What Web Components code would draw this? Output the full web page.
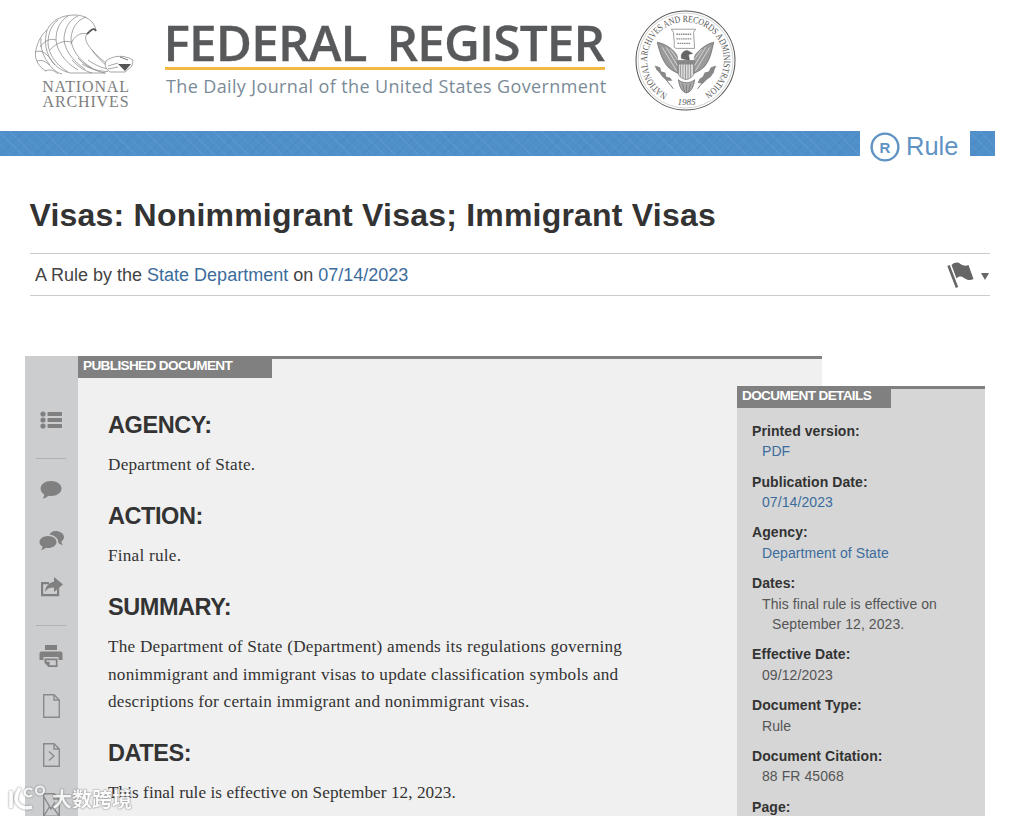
<!DOCTYPE html>
<html lang="en">
<head>
<meta charset="utf-8">
<title>Visas: Nonimmigrant Visas; Immigrant Visas</title>
<style>
    html, body { margin: 0; padding: 0; background: #fff; }
    body { height: 816px; overflow: hidden; position: relative; font-family: "Liberation Sans", Arial, sans-serif; color: #333; }
    fr-title a { color: #3b6c9c; text-decoration: none; }
</style>
</head>
<body>
<fr-header></fr-header>
<fr-type-bar>Rule</fr-type-bar>
<fr-title>
    Visas: Nonimmigrant Visas; Immigrant Visas
    <span slot="byline">A Rule by the <a href="#">State Department</a> on <a href="#">07/14/2023</a></span>
</fr-title>
<fr-document>
    <fr-section titulo="AGENCY:">Department of State.</fr-section>
    <fr-section titulo="ACTION:">Final rule.</fr-section>
    <fr-section titulo="SUMMARY:">The Department of State (Department) amends its regulations governing nonimmigrant and immigrant visas to update classification symbols and descriptions for certain immigrant and nonimmigrant visas.</fr-section>
    <fr-section titulo="DATES:" espaco=".05">This final rule is effective on September 12, 2023.</fr-section>
    <fr-details slot="details">
        <fr-detail rotulo="Printed version:" link>PDF</fr-detail>
        <fr-detail rotulo="Publication Date:" link>07/14/2023</fr-detail>
        <fr-detail rotulo="Agency:" link>Department of State</fr-detail>
        <fr-detail rotulo="Dates:">This final rule is effective on September 12, 2023.</fr-detail>
        <fr-detail rotulo="Effective Date:">09/12/2023</fr-detail>
        <fr-detail rotulo="Document Type:">Rule</fr-detail>
        <fr-detail rotulo="Document Citation:">88 FR 45068</fr-detail>
        <fr-detail rotulo="Page:"></fr-detail>
    </fr-details>
</fr-document>
<fr-watermark></fr-watermark>

<script>
// cada componente monta o proprio shadow root
class FrHeader extends HTMLElement {
    connectedCallback() {
        this.attachShadow({mode: "open"});
        // penas da asa: arcos em coordenadas da pagina
        const penas = [
            "M96 31C95 21 85 15 75 15C62 15 52 20 47 30",
            "M47 30C40 36 37 44 35.500 52C34.500 60 39 67 46 71",
            "M96 31C94 27 91 30 87 34C84 38 86 43 92 50C97 56 103 61 109 65",
            "M86 17C77 20 72 28 71 38C71 48 78 60 92 68",
            "M78 16C69 20 65 28 64 38C64 48 71 60 85 69",
            "M68 16C60 21 56 29 56 40C57 50 64 62 78 70",
            "M58 20C51 25 48 34 48 44C49 54 55 64 68 72",
            "M47 30C44 42 45 54 55 65",
            "M41 38C40 47 43 57 50 65",
            "M87 34C80 32 74 36 71 44",
            "M71 42C64 40 56 43 50 50",
            "M56 40C50 38 44 41 40 47",
            "M35.500 52C42 49 47 54 52 61C56 67 62 71 70 73",
            "M37 61C43 59 48 63 52 68C55 71 58 73 62 74",
            "M45 71C50 69 54 70 58 74",
            "M70 73L106 73",
            "M82 64C90 69 100 71.500 108 71.500",
            "M88 60C95 65 102 68 108 69",
            "M92 50C96 56 101 61 106 65",
            "M78 58C85 66 95 71 105 73",
            "M72 60C78 67 85 71 92 73"
        ].map(d => `<path d="${d}"/>`).join("");
        this.shadowRoot.innerHTML = `
            <style>
                :host { display: flex; height: 131px; box-sizing: border-box; padding: 13px 0 0 33px; }
                .arquivos { width: 103px; margin-right: 29px; display: flex; flex-direction: column; align-items: center; }
                .arquivos svg { display: block; width: 103px; height: 62px; flex: none; }
                .arquivos p { margin: 4px 0 0 3px; font: 16px/15px "Liberation Serif", serif; letter-spacing: .85px; text-align: center; color: #808080; white-space: nowrap; }
                .marca { width: 442px; margin-top: 4px; }
                h1 { margin: 0 0 0 -1.500px; font: 600 49.500px/50px "Open Sans", sans-serif; color: #58595b; white-space: nowrap; word-spacing: 8px; letter-spacing: -.87px; -webkit-text-stroke: .3px #58595b; }
                .fio { height: 3px; margin: 0 2px 0 0; background: #f2b843; }
                .sub { margin: 4px 0 0 1px; font: 18px/24px "Open Sans", sans-serif; color: #7a8b98; white-space: nowrap; letter-spacing: .37px; }
                .selo { width: 101px; height: 101px; margin: -3px 0 0 28px; flex: none; }
            </style>
            <div class="arquivos">
                <svg viewBox="33 13 103 62" fill="none" stroke="#808080" stroke-width=".7" aria-hidden="true">
                    ${penas}
                    <path stroke-width="1.800" stroke="#555" d="M96 31C94 27 91 30 87 34"/>
                    <path fill="#fff" d="M106 61C112 56 123 54 133 60L132 66L125 72L110 72C106 69 104 65 106 61Z"/>
                    <path d="M108 66L118 63M108 69L118 67" />
                    <path fill="#555" stroke="none" d="M118 64L131 64L125 71Z"/>
                    <path stroke="#444" d="M120 57L128 60"/>
                </svg>
                <p>NATIONAL<br>ARCHIVES</p>
            </div>
            <div class="marca">
                <h1>FEDERAL REGISTER</h1>
                <div class="fio"></div>
                <p class="sub">The Daily Journal of the United States Government</p>
            </div>
            <svg class="selo" viewBox="0 0 100 100">
                <circle cx="50" cy="50" r="49" fill="#fff" stroke="#555" stroke-width="1"/>
                <circle cx="50" cy="50" r="47" fill="none" stroke="#aaa" stroke-width=".5"/>
                <defs><path id="arco" d="M32.300 83.400A38 38 0 1 1 67.700 83.400"/></defs>
                <text font-family="Liberation Serif, serif" font-size="9.500" fill="#555">
                    <textPath href="#arco" textLength="200" lengthAdjust="spacingAndGlyphs">NATIONAL ARCHIVES AND RECORDS ADMINISTRATION</textPath>
                </text>
                <text x="51" y="94" text-anchor="middle" font-family="Liberation Serif, serif" font-size="9" font-style="italic" fill="#555">1985</text>
                <!-- pergaminho -->
                <path d="M36 19L60 19L58 22L59 38L41 38C39 38 38 36 39 34L38 22Z" fill="#fff" stroke="#777" stroke-width=".7"/>
                <path d="M41 24H56M41 28.500H56M42 33H55" stroke="#888" stroke-width="1.300" stroke-dasharray="1.500 .7"/>
                <!-- asas -->
                <path d="M22 32C29 33 37 38 41 44C43 48 43 56 43 63C37 60 33 58 30 53C26 47 24 40 22 32Z" fill="#9a9a9a" stroke="#555" stroke-width=".6"/>
                <path d="M78 32C72 33 65 38 60 44C58 48 58 56 58 63C64 60 68 58 71 53C75 47 76 40 78 32Z" fill="#9a9a9a" stroke="#555" stroke-width=".6"/>
                <path d="M27 37L41 60M31 37L42 55M35 39L43 50M60 60L74 37M59 55L70 37M58 50L66 39" stroke="#eee" stroke-width=".7"/>
                <!-- cabeca -->
                <path d="M46 48C45 43 48 40 52 40L57 43L53 44L54 50Z" fill="#666" stroke="#444" stroke-width=".4"/>
                <!-- escudo -->
                <path d="M43 50H58V63C58 66 54 68 50.500 69C47 68 43 66 43 63Z" fill="#ddd" stroke="#666" stroke-width=".6"/>
                <path d="M43 50H58V54H43Z" fill="#888"/>
                <path d="M45 54V66M47.500 54V67.500M50 54V68.500M52.500 54V68.500M55 54V67" stroke="#888" stroke-width=".8"/>
                <!-- ramos e flechas -->
                <path d="M20 56C25 62 30 68 38 78" fill="none" stroke="#555" stroke-width=".8"/>
                <path d="M20 55l5 2l1 4l4 1l1 4l4 1l2 3l-5 0l-5-4l-3-4l-3-3z" fill="#888"/>
                <path d="M80 56C75 62 70 68 62 78" fill="none" stroke="#555" stroke-width=".8"/>
                <path d="M80 55l-5 2l-2 4l-4 1l-2 4l-3 2l-2 4l5 1l4-4l4-3l3-4z" fill="#888"/>
                <path d="M43 69C44 78 48 82 51 82C54 82 58 78 59 69C55 73 47 73 43 69Z" fill="#aaa" stroke="#555" stroke-width=".6"/>
                <path d="M47 73L49 81M51 74V82M55 73L53 81" stroke="#555" stroke-width=".5"/>
            </svg>
        `;
    }
}

class FrTypeBar extends HTMLElement {
    connectedCallback() {
        this.attachShadow({mode: "open"});
        this.shadowRoot.innerHTML = `
            <style>
                :host { display: flex; height: 25px; align-items: center; color: #5f93c4; }
                .hachura {
                    background-color: #4f90cb;
                    background-image:
                        repeating-linear-gradient(45deg, rgba(255,255,255,.06) 0 1px, transparent 1px 8px),
                        repeating-linear-gradient(-45deg, rgba(20,60,110,.06) 0 1px, transparent 1px 8px);
                    height: 25px;
                }
                .faixa { width: 860px; flex: none; }
                .fim { width: 25px; flex: none; }
                .tipo { display: flex; align-items: center; width: 110px; flex: none; box-sizing: border-box; padding: 6px 0 0 10px; font-size: 25.500px; }
                svg { width: 30px; height: 30px; margin-right: 6px; flex: none; }
            </style>
            <div class="hachura faixa"></div>
            <div class="tipo">
                <svg viewBox="0 0 30 30" aria-hidden="true">
                    <circle cx="15" cy="15" r="13.400" fill="none" stroke="#5f93c4" stroke-width="2.400"/>
                    <text x="15" y="20.500" text-anchor="middle" font-family="Liberation Sans, sans-serif" font-weight="700" font-size="15" fill="#5f93c4">R</text>
                </svg>
                <slot></slot>
            </div>
            <div class="hachura fim"></div>
        `;
    }
}

class FrTitle extends HTMLElement {
    connectedCallback() {
        this.attachShadow({mode: "open"});
        this.shadowRoot.innerHTML = `
            <style>
                :host { display: block; padding: 37px 22px 0 30px; }
                h1 { margin: 0 0 15px -.5px; font: 700 32px/45px "Liberation Sans", sans-serif; color: #333; letter-spacing: .21px; }
                .linha { display: flex; justify-content: space-between; align-items: center; box-sizing: content-box; height: 39px; padding: 2px 0 0 5px; border-top: 1px solid #ccc; border-bottom: 1px solid #ccc; font-size: 18px; color: #444; }
                ::slotted(span) { white-space: nowrap; }
                .bandeira { display: flex; align-items: center; margin-top: -2px; }
                svg { display: block; }
                .seta { width: 0; height: 0; border-left: 4px solid transparent; border-right: 4px solid transparent; border-top: 7px solid #666; margin: 3px 1px 0 7px; }
            </style>
            <h1><slot></slot></h1>
            <div class="linha">
                <slot name="byline"></slot>
                <div class="bandeira">
                    <svg width="27" height="28" viewBox="0 0 27 28" aria-hidden="true">
                        <path d="M1.500 4.500L10 26.500" stroke="#666" stroke-width="2.600" fill="none"/>
                        <path d="M4.500 4C8 1 11 1 13.500 3C16.500 5 19 5 21.500 4L26.500 18C23 20 20 19 17 17C14 15 12 15 9.500 17.500Z" fill="#666"/>
                    </svg>
                    <div class="seta"></div>
                </div>
            </div>
        `;
    }
}

// icones da coluna lateral
const ICONES = {
    lista: `<g fill="#808080"><circle cx="3" cy="3" r="2.600"/><circle cx="3" cy="9" r="2.600"/><circle cx="3" cy="15" r="2.600"/><rect x="7.500" y="1" width="14.500" height="4" rx=".7"/><rect x="7.500" y="7" width="14.500" height="4" rx=".7"/><rect x="7.500" y="13" width="14.500" height="4" rx=".7"/></g>`,
    comentario: `<path fill="#808080" d="M11 1C17 1 21.500 4.400 21.500 8.500C21.500 12.600 17 16 11 16C10 16 9.200 15.900 8.400 15.800C6.800 17.300 4.800 18.400 2.600 18.800C3.600 17.400 4.200 15.900 4.200 14.400C2 13 .6 10.900 .6 8.500C.6 4.400 5 1 11 1Z"/>`,
    comentarios: `<g fill="#808080"><path d="M9 6C14 6 17.500 8.800 17.500 12C17.500 15.300 14 18 9 18C8.300 18 7.600 18 7 17.800C5.600 19 3.900 19.800 2 20.200C2.900 19 3.400 17.800 3.400 16.400C1.400 15.300 .5 13.700 .5 12C.5 8.800 4 6 9 6Z"/><path d="M16 1C21 1 25 3.600 25 7C25 8.900 24 10.400 22.400 11.400C22.400 12.600 23 13.800 23.900 15C22 14.700 20.600 14 19.400 13C19.400 8.600 16 5.600 10.600 4.600C11.800 2.400 13.800 1 16 1Z"/></g>`,
    compartilhar: `<g fill="#808080"><path d="M2 6H10V8.200H4.200V18H18V13.500L20.200 11.500V20.200H2Z"/><path d="M15 1L24 8.500L15 16V11.400C11 11.200 8 12.600 6 16C6.400 10.600 9.600 6.600 15 5.800Z"/></g>`,
    imprimir: `<g fill="#808080"><path d="M6 1H18V6H6Z"/><path d="M2.500 7.500H21.500C22.600 7.500 23.500 8.400 23.500 9.500V16H19.500V13H4.500V16H.5V9.500C.5 8.400 1.400 7.500 2.500 7.500Z"/><path d="M5.500 14.500H18.500V23H9.500L5.500 18.800ZM7.400 16.200V17.800H10.600V21.200H16.800V16.200Z"/></g>`,
    documento: `<path fill="none" stroke="#8a8a8a" stroke-width="1.400" d="M1.700 1.700H12L17.300 7V24.300H1.700ZM12 1.700V7H17.300"/>`,
    seta: `<path fill="none" stroke="#8a8a8a" stroke-width="1.400" d="M1.700 1.700H12L17.300 7V24.300H1.700ZM12 1.700V7H17.300M7 9.500L12 14L7 18.500"/>`,
    envelope: `<path fill="none" stroke="#8a8a8a" stroke-width="1.400" d="M1.700 1.700H12L17.300 7V24.300H1.700ZM12 1.700V7H17.300M2 5L9 17L13 10M1.700 24L8 14M17.300 24L10 14"/>`
};

class FrSideIcon extends HTMLElement {
    connectedCallback() {
        this.attachShadow({mode: "open"});
        const nome = this.getAttribute("nome");
        const w = this.getAttribute("w");
        const h = this.getAttribute("h");
        this.shadowRoot.innerHTML = `
            <style>
                :host { display: flex; height: 40px; align-items: center; justify-content: center; margin-top: ${this.getAttribute("topo") || 0}px; padding-right: 1px; }
            </style>
            <svg width="${w}" height="${h}" viewBox="0 0 ${w} ${h}" aria-hidden="true">${ICONES[nome]}</svg>
        `;
    }
}

class FrSideRule extends HTMLElement {
    connectedCallback() {
        this.attachShadow({mode: "open"});
        this.shadowRoot.innerHTML = `
            <style>
                :host { display: block; height: 1px; width: 30px; margin: ${this.getAttribute("topo") || 0}px 0 0 11px; background: #b0b1b3; }
            </style>
        `;
    }
}

class FrDocument extends HTMLElement {
    connectedCallback() {
        this.attachShadow({mode: "open"});
        this.shadowRoot.innerHTML = `
            <style>
                :host { display: flex; position: relative; margin: 60px 0 0 25px; width: 797px; height: 460px; }
                .lado { width: 53px; flex: none; background: #cccdcf; padding-top: 44px; box-sizing: border-box; overflow: hidden; }
                .corpo { flex: 1; background: #f0f0f0; border-top: 3px solid #808080; box-sizing: border-box; overflow: hidden; }
                .aba { width: 194px; height: 22px; margin-top: -3px; background: #808080; color: #fff; font: 700 13.600px/20px "Liberation Sans", sans-serif; padding-left: 5px; box-sizing: border-box; letter-spacing: -.65px; }
                .texto { padding: 32px 0 0 30px; width: 530px; }
                .detalhes { position: absolute; left: 712px; top: 30px; }
            </style>
            <div class="lado">
                <fr-side-icon nome="lista" w="22" h="18"></fr-side-icon>
                <fr-side-rule topo="18"></fr-side-rule>
                <fr-side-icon nome="comentario" w="22" h="20" topo="11"></fr-side-icon>
                <fr-side-icon nome="comentarios" w="25" h="21" topo="10"></fr-side-icon>
                <fr-side-icon nome="compartilhar" w="25" h="21" topo="6"></fr-side-icon>
                <fr-side-rule topo="19"></fr-side-rule>
                <fr-side-icon nome="imprimir" w="24" h="24" topo="10"></fr-side-icon>
                <fr-side-icon nome="documento" w="19" h="26" topo="10"></fr-side-icon>
                <fr-side-icon nome="seta" w="19" h="26" topo="9"></fr-side-icon>
                <fr-side-icon nome="envelope" w="19" h="26" topo="10"></fr-side-icon>
            </div>
            <div class="corpo">
                <div class="aba">PUBLISHED DOCUMENT</div>
                <div class="texto"><slot></slot></div>
            </div>
            <div class="detalhes"><slot name="details"></slot></div>
        `;
    }
}

class FrSection extends HTMLElement {
    connectedCallback() {
        this.attachShadow({mode: "open"});
        const espaco = this.getAttribute("espaco") || ".23";
        this.shadowRoot.innerHTML = `
            <style>
                :host { display: block; margin-bottom: 22.500px; }
                h2 { margin: 0 0 11px 0; font: 700 23.500px/30px "Liberation Sans", sans-serif; color: #333; letter-spacing: -.43px; }
                p { margin: 0; font: 17.200px/27.500px "Liberation Serif", serif; color: #333; letter-spacing: ${espaco}px; }
            </style>
            <h2>${this.getAttribute("titulo")}</h2>
            <p><slot></slot></p>
        `;
    }
}

class FrDetails extends HTMLElement {
    connectedCallback() {
        this.attachShadow({mode: "open"});
        this.shadowRoot.innerHTML = `
            <style>
                :host { display: block; width: 248px; height: 430px; background: #d6d6d6; border-top: 3px solid #808080; box-sizing: border-box; overflow: hidden; }
                .aba { width: 154px; height: 22px; margin-top: -3px; background: #808080; color: #fff; font: 700 13.600px/20px "Liberation Sans", sans-serif; padding-left: 5px; box-sizing: border-box; letter-spacing: -.65px; }
                .lista { padding: 12.800px 15px 0 15px; }
            </style>
            <div class="aba">DOCUMENT DETAILS</div>
            <div class="lista"><slot></slot></div>
        `;
    }
}

class FrDetail extends HTMLElement {
    connectedCallback() {
        this.attachShadow({mode: "open"});
        const ehLink = this.hasAttribute("link");
        this.shadowRoot.innerHTML = `
            <style>
                :host { display: block; margin-bottom: 10px; font: 14px/20.400px "Liberation Sans", sans-serif; }
                b { display: block; color: #333; letter-spacing: .08px; }
                .valor { padding-left: 20px; text-indent: -10px; color: #555; letter-spacing: .08px; }
                a { color: #3b6c9c; text-decoration: none; }
            </style>
            <b>${this.getAttribute("rotulo")}</b>
            <div class="valor">${ehLink ? '<a href="#"><slot></slot></a>' : "<slot></slot>"}</div>
        `;
    }
}

class FrWatermark extends HTMLElement {
    connectedCallback() {
        this.attachShadow({mode: "open"});
        this.shadowRoot.innerHTML = `
            <style>
                :host { position: absolute; left: 8px; top: 782px; display: flex; align-items: center; gap: 0; opacity: .8; }
                svg { display: block; }
                span { font: 700 20px/28px "Noto Sans CJK SC", sans-serif; color: #fff; text-shadow: 0 0 2px #666, 0 0 1px #666; white-space: nowrap; margin-top: 3px; }
            </style>
            <svg width="44" height="30" viewBox="0 0 44 30" fill="none" stroke="#fff" aria-hidden="true" style="filter: drop-shadow(0 0 1px #666)">
                <path stroke-width="3.600" d="M3 8V25M12 5C9 10 8 13 8 16C9 22 15 27 24 24"/>
                <path stroke-width="2.200" d="M24 7A4 4 0 1 0 24 12"/>
                <circle cx="32" cy="7.500" r="4" stroke-width="2"/>
            </svg>
            <span>大数跨境</span>
        `;
    }
}

customElements.define("fr-header", FrHeader);
customElements.define("fr-type-bar", FrTypeBar);
customElements.define("fr-title", FrTitle);
customElements.define("fr-side-icon", FrSideIcon);
customElements.define("fr-side-rule", FrSideRule);
customElements.define("fr-document", FrDocument);
customElements.define("fr-section", FrSection);
customElements.define("fr-details", FrDetails);
customElements.define("fr-detail", FrDetail);
customElements.define("fr-watermark", FrWatermark);
</script>
</body>
</html>
